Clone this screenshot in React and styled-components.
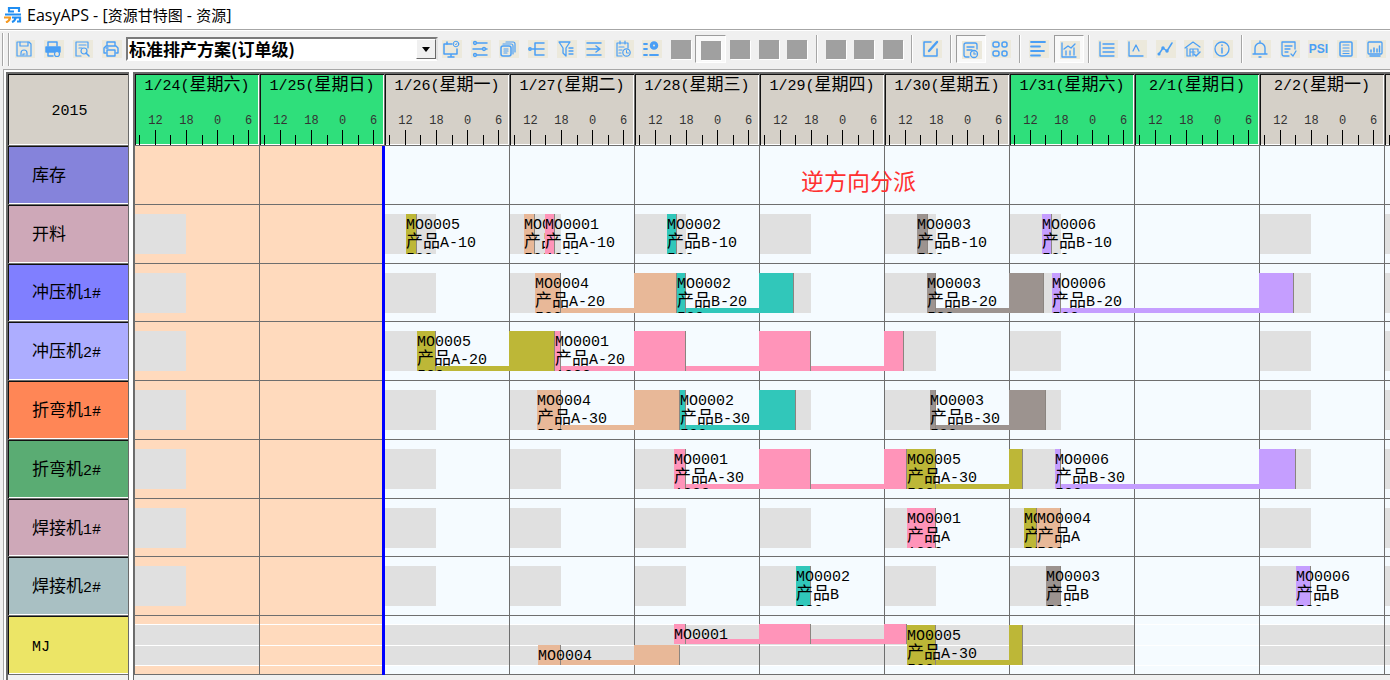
import React from "react";
import styled, { createGlobalStyle, css } from "styled-components";

const DAY = 125;
const line = "#6e6e6e";
const blue = "#4a9ff5";

const GlobalStyle = createGlobalStyle`
  * { box-sizing: border-box; }
  html, body, #root { height: 100%; }
  body {
    margin: 0;
    background: #f0f0f0;
    color: #000;
    font-family: "Liberation Mono", "Noto Sans CJK SC", monospace;
    overflow: hidden;
  }
`;

/* ---------- window ---------- */

const Window = styled.div`
  display: flex;
  flex-direction: column;
  height: 100%;
`;

const TitleBar = styled.header`
  display: flex;
  align-items: center;
  gap: 5px;
  flex: none;
  height: 30px;
  padding-left: 4px;
  background: #fff;
  border-bottom: 1px solid #a6a6a6;
`;

const Title = styled.h1`
  margin: 0;
  font: 400 16px/20px "Open Sans", "Noto Sans CJK SC", sans-serif;
  white-space: nowrap;
`;

/* ---------- toolbar ---------- */

const Toolbar = styled.div`
  display: flex;
  align-items: center;
  flex: none;
  height: 39px;
  padding-bottom: 2px;
  border-top: 1px solid #fff;
`;

const Grip = styled.span`
  flex: none;
  width: 7px;
  height: 33px;
  margin: 0 1px 0 2px;
  border: solid #a6a6a6;
  border-width: 0 1px;
  box-shadow: 1px 0 0 #fff, inset 1px 0 0 #fff;
`;

const ToolButton = styled.button`
  display: flex;
  align-items: center;
  justify-content: center;
  flex: ${(p) => (p.$fixed ? "0 0 29px" : "1 1 0")};
  min-width: 0;
  height: 28px;
  padding: 0;
  border: 1px solid transparent;
  background: none;
  ${(p) =>
    p.$pressed &&
    css`
      border-color: #9c9c9c #fff #fff #9c9c9c;
      background: #f9f9f9;
      padding: 2px 0 0 2px;
    `}
`;

const IconTile = styled.svg`
  display: block;
  flex: none;
  width: 20px;
  height: 18px;
  background: #ece9dc;
  fill: none;
  stroke: ${blue};
  stroke-width: 1.5;
  stroke-linecap: round;
  stroke-linejoin: round;
`;

const EmptyTile = styled.span`
  width: 20px;
  height: 19px;
  background: #a0a0a0;
  box-shadow: 1px 1px 0 #fff;
`;

const Separator = styled.span`
  flex: none;
  width: 2px;
  height: 28px;
  margin: 0 4px;
  background: #a6a6a6;
  border-right: 1px solid #fff;
`;

const PlanBox = styled.div`
  position: relative;
  flex: none;
  width: 312px;
  height: 24px;
  border: 2px solid;
  border-color: #7a7a7a #e3e3e3 #fff #7a7a7a;
`;

const PlanSelect = styled.select`
  display: block;
  width: 100%;
  height: 100%;
  margin: 0;
  padding: 0 20px 0 1px;
  border: 0;
  border-radius: 0;
  appearance: none;
  background: #fff;
  color: #000;
  font: 700 17px/20px "Noto Sans CJK SC", sans-serif;
`;

const PlanArrow = styled.span`
  position: absolute;
  top: 0;
  right: 0;
  display: flex;
  align-items: center;
  justify-content: center;
  width: 20px;
  height: 20px;
  background: #f0f0f0;
  border: 1px solid;
  border-color: #fff #696969 #696969 #fff;
  pointer-events: none;
  &::after {
    content: "";
    border: 4px solid transparent;
    border-top: 5px solid #000;
    border-bottom: 0;
  }
`;

/* ---------- gantt frame ---------- */

const Chart = styled.main`
  display: flex;
  flex: 1;
  min-height: 0;
  margin-left: 3px;
  border: solid #a8a8a8;
  border-width: 1px 0 0 1px;
  box-shadow: inset 2px 2px 0 #fff;
  padding: 2px 0 0 2px;
`;

const ResourcePane = styled.section`
  display: flex;
  flex-direction: column;
  flex: none;
  width: 123px;
  padding-bottom: 5px;
  border: solid #6a6a6a;
  border-width: 2px 1px 0 2px;
`;

const Splitter = styled.div`
  flex: none;
  width: 4px;
  background: #fff;
`;

const TimePane = styled.section`
  display: flex;
  flex-direction: column;
  flex: 1;
  min-width: 0;
  padding-bottom: 5px;
  overflow: hidden;
  border: solid #6a6a6a;
  border-width: 2px 0 0 1px;
`;

const bevel = css`
  border-bottom: 1px solid ${line};
  box-shadow: inset 1px 1px 0 #111, inset 0 -1px 0 #fff;
`;

const YearCell = styled.div`
  display: flex;
  align-items: center;
  justify-content: center;
  padding: 5px 0 0 3px;
  flex: none;
  height: 72px;
  background: #d5d0c8;
  font-size: 15px;
  line-height: 18px;
  ${bevel}
`;

const Rows = styled.div`
  display: grid;
  flex: 1;
  grid-template-rows: repeat(9, minmax(0, 1fr));
`;

const ResourceCell = styled.div`
  display: flex;
  align-items: center;
  padding: 5px 0 0 24px;
  background: ${(p) => p.$color};
  font-size: 15px;
  line-height: 18px;
  white-space: nowrap;
  ${bevel}
`;

const Han = styled.span`
  font-size: ${(p) => p.$size}px;
  line-height: inherit;
`;

/* ---------- time header ---------- */

const DayHeader = styled.div`
  display: flex;
  flex: none;
  height: 72px;
`;

const DayCell = styled.div`
  display: flex;
  flex-direction: column;
  flex: none;
  width: ${DAY}px;
  padding-top: 1px;
  background: ${(p) => (p.$weekend ? "#2fdf7b" : "#d5d0c8")};
  border-left: 1px solid ${line};
  border-bottom: 1px solid ${line};
  box-shadow: inset 1px 1px 0 #111, inset -1px -1px 0 #fff;
`;

const DayName = styled.div`
  height: 39px;
  font-size: 15px;
  line-height: 21px;
  text-align: center;
  white-space: nowrap;
`;

const Hours = styled.div`
  display: grid;
  grid-template-columns: repeat(4, 1fr);
  margin: 0 -5px 0 5px;
  height: 16px;
  font-size: 12px;
  line-height: 14px;
  text-align: center;
  color: #333;
`;

const Ticks = styled.div`
  display: grid;
  grid-template-columns: repeat(8, 1fr);
  align-items: end;
  flex: 1;
  margin: 0 -5px 0 4px;
`;

const Tick = styled.span`
  height: ${(p) => (p.$major ? 15 : 10)}px;
  border-left: 1px solid #000;
`;

/* ---------- time canvas ---------- */

const Canvas = styled(Rows)`
  position: relative;
  background:
    repeating-linear-gradient(90deg, ${line} 0 1px, transparent 1px ${DAY}px),
    linear-gradient(90deg, #ffdabd ${DAY * 2}px, #f5fbff ${DAY * 2}px);
`;

const TimeRow = styled.div`
  position: relative;
  border-bottom: 1px solid ${line};
`;

const Shift = styled.span.attrs((p) => ({ style: { left: p.$day * DAY + 1 } }))`
  position: absolute;
  top: 9px;
  width: 51px;
  height: 40px;
  background: #e0e0e0;
`;

const LanePair = styled.span.attrs((p) => ({ style: { left: p.$day * DAY + 1 } }))`
  position: absolute;
  top: 8px;
  display: grid;
  grid-template-rows: 20px 19px;
  gap: 1px;
  width: ${DAY - 1}px;
  padding: 1px 0;
  background: linear-gradient(#fff, #fff) 0 0 / 100% 1px no-repeat,
    linear-gradient(#fff, #fff) 0 21px / 100% 1px no-repeat,
    linear-gradient(#fff, #fff) 0 100% / 100% 1px no-repeat;
`;

const Lane = styled.span`
  background: ${(p) => (p.$on ? "#e0e0e0" : "transparent")};
`;

const laneBox = {
  full: css`top: 9px; height: 40px;`,
  upper: css`top: 8px; height: 20px;`,
  lower: css`top: 29px; height: 20px;`,
};

const Segment = styled.span.attrs((p) => ({
  style: { left: p.$from, width: p.$to - p.$from },
}))`
  position: absolute;
  ${(p) => laneBox[p.$lane]}
  background: ${(p) => p.$color};
  border-right: 1px solid #8b8580;
`;

const LinkBox = styled.span.attrs((p) => ({
  style: { left: p.$from, width: p.$to - p.$from },
}))`
  position: absolute;
  ${(p) => laneBox[p.$lane]}
  display: flex;
  align-items: flex-end;
`;

const Link = styled.span`
  flex: 1;
  height: 5px;
  background: ${(p) => p.$color};
`;

const JobLabel = styled.span.attrs((p) => ({
  style: { left: p.$from, maxWidth: p.$room },
}))`
  position: absolute;
  ${(p) => laneBox[p.$lane]}
  padding-top: 3px;
  overflow: hidden;
  font-size: 15px;
  line-height: 17px;
  white-space: nowrap;
`;

const LabelLine = styled.span`
  display: block;
  height: 17px;
`;

const NowLine = styled.span`
  position: absolute;
  top: 0;
  bottom: 0;
  left: ${DAY * 2 - 2}px;
  width: 3px;
  background: #00f;
`;

const Note = styled.p`
  position: absolute;
  top: 18px;
  left: 667px;
  margin: 0;
  color: #ff3030;
  font: 400 23px/32px "Noto Sans CJK SC", sans-serif;
  white-space: nowrap;
`;

/* ---------- data ---------- */

const days = [
  ["1/24(星期六)", true],
  ["1/25(星期日)", true],
  ["1/26(星期一)"],
  ["1/27(星期二)"],
  ["1/28(星期三)"],
  ["1/29(星期四)"],
  ["1/30(星期五)"],
  ["1/31(星期六)", true],
  ["2/1(星期日)", true],
  ["2/2(星期一)"],
  [""],
];

const orders = {
  1: { name: "MO0001", color: "#ff94b9", qty: "1000" },
  2: { name: "MO0002", color: "#31c7ba", qty: "500" },
  3: { name: "MO0003", color: "#9c938f", qty: "500" },
  4: { name: "MO0004", color: "#e8b898", qty: "500" },
  5: { name: "MO0005", color: "#bdb737", qty: "500" },
  6: { name: "MO0006", color: "#c59eff", qty: "500" },
};

const job = (order, item, segments, lane = "full") => ({ order, item, segments, lane });

/* Segments are pixel offsets from the start of the time scale. */
const resources = [
  { name: "库存", color: "#8583db", kind: "stock", jobs: [] },
  {
    name: "开料",
    color: "#cea8b8",
    jobs: [
      job(5, "产品A-10", [[272, 283]]),
      job(4, "产品A-10", [[390, 401]]),
      job(1, "产品A-10", [[411, 421]]),
      job(2, "产品B-10", [[533, 543]]),
      job(3, "产品B-10", [[783, 794]]),
      job(6, "产品B-10", [[908, 918]]),
    ],
  },
  {
    name: "冲压机1#",
    color: "#807fff",
    jobs: [
      job(4, "产品A-20", [[401, 427], [500, 543]]),
      job(2, "产品B-20", [[543, 552], [625, 660]]),
      job(3, "产品B-20", [[793, 802], [875, 910]]),
      job(6, "产品B-20", [[918, 927], [1125, 1160]]),
    ],
  },
  {
    name: "冲压机2#",
    color: "#adadff",
    jobs: [
      job(5, "产品A-20", [[283, 302], [375, 421]]),
      job(1, "产品A-20", [[421, 427], [500, 552], [625, 677], [750, 770]]),
    ],
  },
  {
    name: "折弯机1#",
    color: "#ff8656",
    jobs: [
      job(4, "产品A-30", [[403, 427], [500, 546]]),
      job(2, "产品B-30", [[546, 552], [625, 662]]),
      job(3, "产品B-30", [[796, 802], [875, 912]]),
    ],
  },
  {
    name: "折弯机2#",
    color: "#5aac73",
    jobs: [
      job(1, "产品A-30", [[540, 552], [625, 677], [750, 773]]),
      job(5, "产品A-30", [[773, 802], [875, 889]]),
      job(6, "产品B-30", [[921, 927], [1125, 1162]]),
    ],
  },
  {
    name: "焊接机1#",
    color: "#cea8b8",
    jobs: [
      job(1, "产品A", [[773, 802]]),
      job(5, "产品A", [[890, 903]]),
      job(4, "产品A", [[903, 927]]),
    ],
  },
  {
    name: "焊接机2#",
    color: "#a9c0c3",
    jobs: [
      job(2, "产品B", [[662, 677]]),
      job(3, "产品B", [[912, 927]]),
      job(6, "产品B", [[1162, 1177]]),
    ],
  },
  {
    name: "MJ",
    color: "#ece566",
    kind: "lanes",
    jobs: [
      job(4, "产品A-30", [[404, 427], [500, 546]], "lower"),
      job(1, "产品A-30", [[540, 552], [625, 677], [750, 773]], "upper"),
      job(5, "产品A-30", [[773, 802], [875, 889]]),
    ],
  },
];

/* ---------- icons ---------- */

const icons = {
  save: (
    <>
      <path d="M2 2h12l2 2v12H2z" strokeWidth="1.2" />
      <path d="M5 2v4h8V2M6 15v-2a3 3 0 0 1 6 0v2M8 15v-1h2" strokeWidth="1.2" />
    </>
  ),
  printSetup: (
    <>
      <path d="M4 6V2h9v4" />
      <path d="M2 7h14v5H2z" fill={blue} />
      <path d="M4 12v4h5" />
      <circle cx="13" cy="14" r="2.5" fill="#ece9dc" strokeWidth="1.2" />
    </>
  ),
  preview: (
    <>
      <path d="M8 16H3V2h12v6M6 5h7M6 8h3" strokeWidth="1.2" />
      <circle cx="11" cy="11" r="3" strokeWidth="1.2" />
      <path d="m13 13 3 3" />
    </>
  ),
  print: (
    <>
      <path d="M5 6V2h8v4M4 13H2V8l2-2h10l2 2v5h-2" strokeWidth="1.4" />
      <path d="M5 10h8v6H5zM4 8h2" strokeWidth="1.4" />
    </>
  ),
  board: (
    <>
      <path d="M10 4H2v10h13V9M9 14v2M6 17h6" />
      <path d="M5 2v2" />
      <circle cx="14" cy="4" r="2.8" strokeWidth="1" />
      <path d="m13 4 1 1 1-2" strokeWidth="0.8" />
    </>
  ),
  sliders: (
    <>
      <path d="M6 3h10M2 9h9M15 9h1M6 15h10" />
      <circle cx="4" cy="3" r="1.4" />
      <circle cx="13" cy="9" r="1.4" />
      <circle cx="4" cy="15" r="1.4" />
    </>
  ),
  copies: (
    <>
      <rect x="2" y="6" width="10" height="10" rx="2" />
      <path d="M4 4h8q2 0 2 2v8M7 2h7q2 0 2 2v8M5 9h4M5 11h4M5 13h3" strokeWidth="1.2" />
    </>
  ),
  tree: (
    <>
      <path d="M7 3h9M4 9h12M7 15h9M7 3v12" />
      <circle cx="2" cy="9" r="1.2" />
    </>
  ),
  filter: <path d="M2 2h11L9 8v8l-3-3V8zM12 8h4M12 11h4M12 14h4" strokeWidth="1.3" />,
  sendRight: <path d="M2 3h14M2 9h12M11 6l4 3-4 3M2 15h14" />,
  schedule: (
    <>
      <path d="M8 16H3V3h11v5M6 1v3M11 1v3M5 7h5M5 10h3M5 13h2" strokeWidth="1.2" />
      <circle cx="12.5" cy="12.5" r="3.7" strokeWidth="1.2" />
      <path d="M12.5 10.5v2.5h2" strokeWidth="1" />
    </>
  ),
  milestone: (
    <>
      <path d="M2 4h3M2 9h3M2 15h3M8 15h8" strokeWidth="1.8" />
      <circle cx="12" cy="5.5" r="3.5" fill={blue} />
      <circle cx="12" cy="5.5" r="1" fill="#ece9dc" stroke="none" />
    </>
  ),
  edit: (
    <>
      <path d="M9 2H2v14h13V9" />
      <path d="M7 11 15 2" strokeWidth="2.4" />
    </>
  ),
  report: (
    <>
      <path d="M7 16H4q-2 0-2-2V4q0-2 2-2h9q2 0 2 2v4M5 6h7M5 9h5" strokeWidth="1.3" />
      <circle cx="12" cy="13" r="3.5" strokeWidth="1.3" />
      <path d="M12 13v-2M12 13h2" strokeWidth="1" />
    </>
  ),
  tiles: (
    <>
      <rect x="2" y="2" width="6" height="5" rx="2" />
      <rect x="11" y="2" width="5" height="5" rx="2" />
      <rect x="2" y="11" width="6" height="5" rx="2" />
      <rect x="11" y="11" width="5" height="5" rx="2" />
    </>
  ),
  alignLeft: <path d="M2 2h14M2 6.5h9M2 11h13M2 15.5h9" strokeWidth="1.8" />,
  barTrend: <path d="M2 2v14h14M6 14v-4M10 14v-4M14 14V7M4 8l4-3 3 2 4-4" strokeWidth="1.3" />,
  listAxis: <path d="M2 2v14h14M5 4h11M5 8h11M5 12h11" strokeWidth="1.3" />,
  scatter: <path d="M2 2v14h14M6 11l3-6 3 6" strokeWidth="1.3" />,
  trend: (
    <>
      <path d="m3 14 4-6 4 3 5-8" />
      <circle cx="7" cy="8" r="1" fill={blue} />
      <circle cx="11" cy="11" r="1" fill={blue} />
      <circle cx="3" cy="14" r="0.8" />
    </>
  ),
  warehouse: (
    <>
      <path d="M1 8 9 2l7 5M3 8v8h4M6 9h8v3M6 9v6M6 12h5M9 9v7" strokeWidth="1.2" />
      <path d="m10 14 2 2 4-4" />
    </>
  ),
  info: (
    <>
      <circle cx="9" cy="9" r="7" strokeWidth="1.3" />
      <path d="M9 8v5M9 5v.5" />
    </>
  ),
  bell: <path d="M2 14h14M4 14V8a5 5 0 0 1 10 0v6M9 1v2M8 17h2" strokeWidth="1.4" />,
  note: <path d="M9 16H4q-2 0-2-2V2h13v7M5 6h7M5 9h5M5 12h3M11 14l2 2 3-5" strokeWidth="1.3" />,
  page: (
    <>
      <rect x="3" y="2" width="12" height="14" rx="1" />
      <path d="M6 5h6M6 8h6M6 11h6M6 13.5h6" strokeWidth="1.2" />
    </>
  ),
  monitor: (
    <>
      <rect x="2" y="2" width="14" height="12" rx="1" strokeWidth="1.3" />
      <path d="M5 12v-2M8 12V8M11 12V9M13.5 12V6M4 16h10" strokeWidth="1.5" />
    </>
  ),
};

const PsiText = styled.span`
  flex: none;
  width: 20px;
  height: 18px;
  background: #ece9dc;
  color: ${blue};
  font: 700 12px/18px "Liberation Sans", sans-serif;
  text-align: center;
`;

const fileTools = [
  ["save", "保存"],
  ["printSetup", "打印设置"],
  ["preview", "打印预览"],
  ["print", "打印"],
];

const tools = [
  ["board"], ["sliders"], ["copies"], ["tree"], ["filter"], ["sendRight"], ["schedule"], ["milestone"],
  ["empty"], ["empty", true], ["empty"], ["empty"], ["empty"], ["|"],
  ["empty"], ["empty"], ["empty"], ["|"],
  ["edit"], ["|"],
  ["report", true], ["tiles"], ["|"],
  ["alignLeft"], ["barTrend", true], ["|"],
  ["listAxis"], ["scatter"], ["trend"], ["warehouse"], ["info"], ["|"],
  ["bell"], ["note"], ["psi"], ["page"], ["monitor"],
];

function ToolIcon({ name }) {
  if (name === "empty") return <EmptyTile />;
  if (name === "psi") return <PsiText>PSI</PsiText>;
  return (
    <IconTile viewBox="0 0 20 18" aria-hidden="true">
      {icons[name]}
    </IconTile>
  );
}

function Logo() {
  return (
    <svg width="18" height="17" viewBox="0 0 18 17" fill="none" strokeWidth="2.2" aria-hidden="true">
      <path d="M5 1v4.5M4 2h11v4M4 5.5h6M1 8.5h16" stroke="#1f8df2" />
      <path d="M0 11.5h6q0 3-4 5" stroke="#f59a23" />
      <path d="M8 16q3-1 4-5M8 11.5h8v4h-3" stroke="#1f8df2" />
    </svg>
  );
}

/* Chinese and Latin runs carry different sizes. */
function Mixed({ text, size = 17 }) {
  return text
    .split(/([\u4e00-\u9fff]+)/)
    .filter(Boolean)
    .map((part, i) =>
      /[\u4e00-\u9fff]/.test(part) ? (
        <Han key={i} $size={size}>
          {part}
        </Han>
      ) : (
        part
      )
    );
}

function Job({ data, next }) {
  const { color, name, qty } = orders[data.order];
  const { segments, lane } = data;
  const start = segments[0][0];
  const firstEnd = segments[0][1];
  const lastStart = segments[segments.length - 1][0];
  const room = next ? next.segments[0][0] - start : undefined;
  return (
    <>
      {segments.length > 1 && (
        <LinkBox $from={firstEnd - 1} $to={lastStart} $lane={lane}>
          <Link $color={color} />
        </LinkBox>
      )}
      {segments.map(([from, to]) => (
        <Segment key={from} $from={from} $to={to} $lane={lane} $color={color} />
      ))}
      <JobLabel $from={start} $room={room} $lane={lane}>
        <LabelLine>{name}</LabelLine>
        {lane === "full" && (
          <>
            <LabelLine>
              <Mixed text={data.item} />
            </LabelLine>
            <LabelLine>{qty}</LabelLine>
          </>
        )}
      </JobLabel>
    </>
  );
}

function Calendar({ kind }) {
  if (kind === "stock") return null;
  return days.map((_, day) => {
    const working = day !== 1 && day !== 8;
    if (kind === "lanes") {
      return (
        <LanePair key={day} $day={day}>
          <Lane $on={working} />
          <Lane $on={working} />
        </LanePair>
      );
    }
    return working ? <Shift key={day} $day={day} /> : null;
  });
}

export default function App() {
  return (
    <Window>
      <GlobalStyle />
      <TitleBar>
        <Logo />
        <Title>
          <Mixed text="EasyAPS - [资源甘特图 - 资源]" size={15} />
        </Title>
      </TitleBar>
      <Toolbar role="toolbar">
        <Grip />
        {fileTools.map(([name, label]) => (
          <ToolButton key={name} $fixed aria-label={label}>
            <ToolIcon name={name} />
          </ToolButton>
        ))}
        <PlanBox>
          <PlanSelect aria-label="排产方案" defaultValue="order">
            <option value="order">标准排产方案(订单级)</option>
          </PlanSelect>
          <PlanArrow />
        </PlanBox>
        {tools.map(([name, pressed], i) =>
          name === "|" ? (
            <Separator key={i} />
          ) : (
            <ToolButton key={i} $pressed={pressed} disabled={name === "empty"} aria-label={name}>
              <ToolIcon name={name} />
            </ToolButton>
          )
        )}
      </Toolbar>
      <Chart>
        <ResourcePane>
          <YearCell>2015</YearCell>
          <Rows>
            {resources.map((r) => (
              <ResourceCell key={r.name} $color={r.color}>
                <span>
                  <Mixed text={r.name} />
                </span>
              </ResourceCell>
            ))}
          </Rows>
        </ResourcePane>
        <Splitter />
        <TimePane>
          <DayHeader>
            {days.map(([name, weekend], i) => (
              <DayCell key={i} $weekend={weekend}>
                <DayName>
                  <Mixed text={name} />
                </DayName>
                <Hours>
                  {name && ["12", "18", "0", "6"].map((h) => <span key={h}>{h}</span>)}
                </Hours>
                <Ticks>
                  {[0, 1, 2, 3, 4, 5, 6, 7].map((t) => (
                    <Tick key={t} $major={t % 2 === 1} />
                  ))}
                </Ticks>
              </DayCell>
            ))}
          </DayHeader>
          <Canvas>
            {resources.map((r) => (
              <TimeRow key={r.name}>
                <Calendar kind={r.kind} />
                {r.jobs.map((j, i) => (
                  <Job key={i} data={j} next={j.lane === "full" ? r.jobs[i + 1] : undefined} />
                ))}
                {r.kind === "stock" && <Note>逆方向分派</Note>}
              </TimeRow>
            ))}
            <NowLine />
          </Canvas>
        </TimePane>
      </Chart>
    </Window>
  );
}
